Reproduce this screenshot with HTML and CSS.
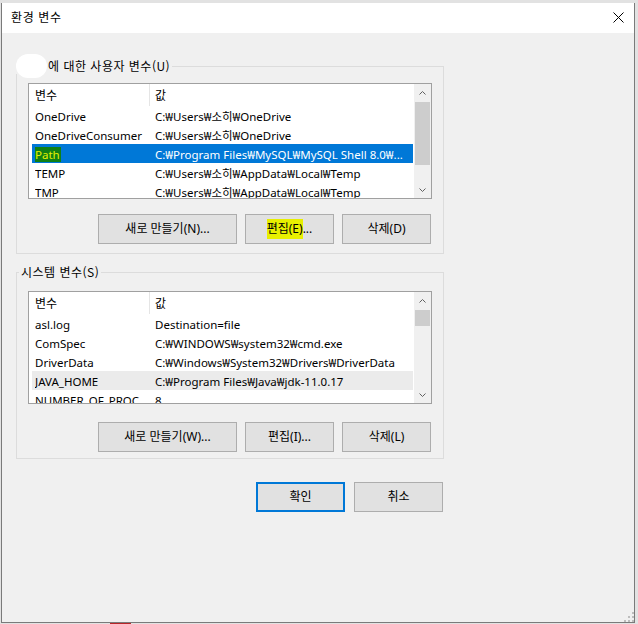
FILE: index.html
```html
<!DOCTYPE html>
<html lang="ko">
<head>
<meta charset="utf-8">
<title>환경 변수</title>
<link rel="stylesheet" href="styles.css">
</head>
<body>
<div class="window">
  <div class="titlebar">
    <span class="title">환경 변수</span>
    <span class="close"><svg width="11" height="11" viewBox="0 0 11 11"><path d="M0.5 0.5L10.5 10.5M10.5 0.5L0.5 10.5" stroke="#000" stroke-width="1" fill="none"/></svg></span>
  </div>
  <div class="content">
    <fieldset class="group">
      <legend class="legend legend-user"><span class="redact"></span>에 대한 사용자 변수(U)</legend>
      <div class="group-body body-user">
        <div class="list list-user">
          <div class="grid">
            <div class="head"><span class="hcell hname">변수</span><span class="hcell hvalue">값</span></div>
            <div class="row"><span class="cell cname">OneDrive</span><span class="cell">C:₩Users₩소히₩OneDrive</span></div>
            <div class="row"><span class="cell cname">OneDriveConsumer</span><span class="cell">C:₩Users₩소히₩OneDrive</span></div>
            <div class="row selected"><span class="cell cname"><span class="marker">Path</span></span><span class="cell">C:₩Program Files₩MySQL₩MySQL Shell 8.0₩...</span></div>
            <div class="row"><span class="cell cname">TEMP</span><span class="cell">C:₩Users₩소히₩AppData₩Local₩Temp</span></div>
            <div class="row"><span class="cell cname">TMP</span><span class="cell">C:₩Users₩소히₩AppData₩Local₩Temp</span></div>
          </div>
          <div class="scrollbar">
            <div class="sb-btn"><svg width="7" height="4" viewBox="0 0 7 4"><path d="M0.5 3.5L3.5 0.5L6.5 3.5" stroke="#606060" fill="none"/></svg></div>
            <div class="sb-track"><div class="thumb thumb-user"></div></div>
            <div class="sb-btn"><svg width="7" height="4" viewBox="0 0 7 4"><path d="M0.5 0.5L3.5 3.5L6.5 0.5" stroke="#606060" fill="none"/></svg></div>
          </div>
        </div>
        <div class="buttons buttons-user">
          <button class="btn btn-wide">새로 만들기(N)...</button>
          <button class="btn"><span class="hl">편집(E)</span>...</button>
          <button class="btn">삭제(D)</button>
        </div>
      </div>
    </fieldset>

    <fieldset class="group group-system">
      <legend class="legend">시스템 변수(S)</legend>
      <div class="group-body body-system">
        <div class="list list-system">
          <div class="grid">
            <div class="head"><span class="hcell hname">변수</span><span class="hcell hvalue">값</span></div>
            <div class="row"><span class="cell cname">asl.log</span><span class="cell">Destination=file</span></div>
            <div class="row"><span class="cell cname">ComSpec</span><span class="cell">C:₩WINDOWS₩system32₩cmd.exe</span></div>
            <div class="row"><span class="cell cname">DriverData</span><span class="cell">C:₩Windows₩System32₩Drivers₩DriverData</span></div>
            <div class="row hover"><span class="cell cname">JAVA_HOME</span><span class="cell">C:₩Program Files₩Java₩jdk-11.0.17</span></div>
            <div class="row"><span class="cell cname">NUMBER_OF_PROCESSORS</span><span class="cell">8</span></div>
          </div>
          <div class="scrollbar">
            <div class="sb-btn"><svg width="7" height="4" viewBox="0 0 7 4"><path d="M0.5 3.5L3.5 0.5L6.5 3.5" stroke="#606060" fill="none"/></svg></div>
            <div class="sb-track"><div class="thumb thumb-system"></div></div>
            <div class="sb-btn"><svg width="7" height="4" viewBox="0 0 7 4"><path d="M0.5 0.5L3.5 3.5L6.5 0.5" stroke="#606060" fill="none"/></svg></div>
          </div>
        </div>
        <div class="buttons buttons-system">
          <button class="btn btn-wide">새로 만들기(W)...</button>
          <button class="btn">편집(I)...</button>
          <button class="btn">삭제(L)</button>
        </div>
      </div>
    </fieldset>

    <div class="footer">
      <button class="btn btn-default">확인</button>
      <button class="btn">취소</button>
    </div>
  </div>
  <div class="grip"><svg width="10" height="10" viewBox="0 0 10 10" fill="#bdbdbd"><rect x="8" y="0" width="2" height="2"/><rect x="4" y="4" width="2" height="2"/><rect x="8" y="4" width="2" height="2"/><rect x="0" y="8" width="2" height="2"/><rect x="4" y="8" width="2" height="2"/><rect x="8" y="8" width="2" height="2"/></svg></div>
</div>
<div class="taskbar"><span class="taskmark"></span></div>
</body>
</html>
```
FILE: styles.css
```css
html, body {
  margin: 0;
  padding: 0;
}
body {
  width: 638px;
  height: 624px;
  overflow: hidden;
  background: #e2e2e2;
  font-family: "Noto Sans", "Noto Sans CJK KR", sans-serif;
  font-size: 12px;
  color: #000;
}
.window {
  position: relative;
  box-sizing: border-box;
  width: 634px;
  height: 620px;
  margin: 3px 0 0 1px;
  border: 1px solid #7a7a7a;
  border-top: none;
  background: #f0f0f0;
  display: flex;
  flex-direction: column;
}
.titlebar {
  height: 30px;
  flex: 0 0 30px;
  background: #fff;
  display: flex;
  align-items: center;
  justify-content: space-between;
  padding: 0 10px 2px 9px;
  box-sizing: border-box;
}
.title {
  font-family: "Noto Sans CJK KR", sans-serif;
  font-size: 12px;
  line-height: 16px;
  letter-spacing: 0.6px;
}
.close {
  display: flex;
  width: 11px;
  height: 11px;
}
.content {
  padding: 25px 0 0 14px;
  display: flex;
  flex-direction: column;
}
.group {
  margin: 0;
  padding: 0;
  border: 1px solid #dcdcdc;
  width: 428px;
  box-sizing: border-box;
  min-inline-size: 0;
}
.group-system {
  margin-top: 10px;
}
.legend {
  padding: 0 2px;
  margin-left: 2px;
  height: 16px;
  line-height: 16px;
  font-size: 12px;
  font-family: "Noto Sans CJK KR", sans-serif;
  letter-spacing: 0.5px;
}
.legend-user {
  display: flex;
  align-items: center;
  margin-left: -1px;
  padding: 0 2px 0 0;
}
.redact {
  flex: 0 0 31px;
  width: 31px;
  height: 24px;
  border-radius: 12px;
  background: #fff;
  margin-right: 1px;
}
.group-body {
  display: flex;
  flex-direction: column;
}
.body-user {
  padding: 9px 11px 9px 11px;
}
.body-system {
  padding: 11px 11px 6px 11px;
}
.list {
  box-sizing: border-box;
  border: 1px solid #a0a0a0;
  background: #fff;
  display: flex;
}
.list-user {
  height: 116px;
}
.list-system {
  height: 113px;
}
.grid {
  flex: 1;
  min-width: 0;
  overflow: hidden;
  font-size: 11.5px;
}
.head {
  display: grid;
  grid-template-columns: 115px 1fr;
  height: 22px;
  line-height: 22px;
  margin-left: 6px;
  font-size: 12px;
}
.hcell {
  font-family: "Noto Sans CJK KR", sans-serif;
}
.hname {
  border-right: 1px solid #e5e5e5;
}
.hvalue {
  padding-left: 5px;
}
.row {
  display: grid;
  grid-template-columns: 120px 1fr;
  box-sizing: border-box;
  height: 19px;
  padding-top: 2px;
  line-height: 17px;
  margin: 0 1px 0 3px;
  padding-left: 3px;
}
.cell {
  overflow: hidden;
  white-space: nowrap;
  text-overflow: ellipsis;
}
.cname {
  padding-right: 6px;
}
.selected {
  background: #0078d7;
  color: #fff;
}
.hover {
  background: #ebebeb;
}
.marker {
  display: inline-block;
  height: 15px;
  line-height: 15px;
  margin-left: -3px;
  padding-right: 1px;
  border-left: 3px solid #e8ee00;
  background: #118014;
  color: #e4f000;
}
.scrollbar {
  width: 17px;
  flex: 0 0 17px;
  background: #f0f0f0;
  display: flex;
  flex-direction: column;
}
.sb-btn {
  height: 17px;
  flex: 0 0 17px;
  display: flex;
  align-items: center;
  justify-content: center;
}
.sb-track {
  flex: 1;
}
.thumb {
  margin: 1px 1px 0 1px;
  background: #cdcdcd;
}
.thumb-user {
  height: 63px;
}
.thumb-system {
  height: 16px;
}
.buttons {
  display: flex;
  justify-content: flex-end;
  gap: 8px;
  padding-right: 1px;
}
.buttons-user {
  margin-top: 15px;
}
.buttons-system {
  margin-top: 18px;
}
.btn {
  box-sizing: border-box;
  width: 89px;
  height: 30px;
  padding: 0;
  border: 1px solid #adadad;
  background: #e1e1e1;
  font-family: "Noto Sans", "Noto Sans CJK KR", sans-serif;
  font-size: 12px;
  color: #000;
  line-height: 16px;
}
.btn-wide {
  width: 139px;
}
.btn-default {
  border-color: #0078d7;
  box-shadow: inset 0 0 0 1px #0078d7;
}
.hl {
  background: #e8ef00;
  padding: 1px 0 2px;
}
.footer {
  display: flex;
  justify-content: flex-end;
  gap: 9px;
  width: 428px;
  padding-right: 1px;
  box-sizing: border-box;
  margin-top: 23px;
}
.grip {
  position: absolute;
  right: 0;
  bottom: 0;
  width: 10px;
  height: 10px;
  display: flex;
}
.taskbar {
  height: 1px;
  display: flex;
}
.taskmark {
  width: 21px;
  height: 1px;
  margin-left: 110px;
  background: #b8262a;
}
```
